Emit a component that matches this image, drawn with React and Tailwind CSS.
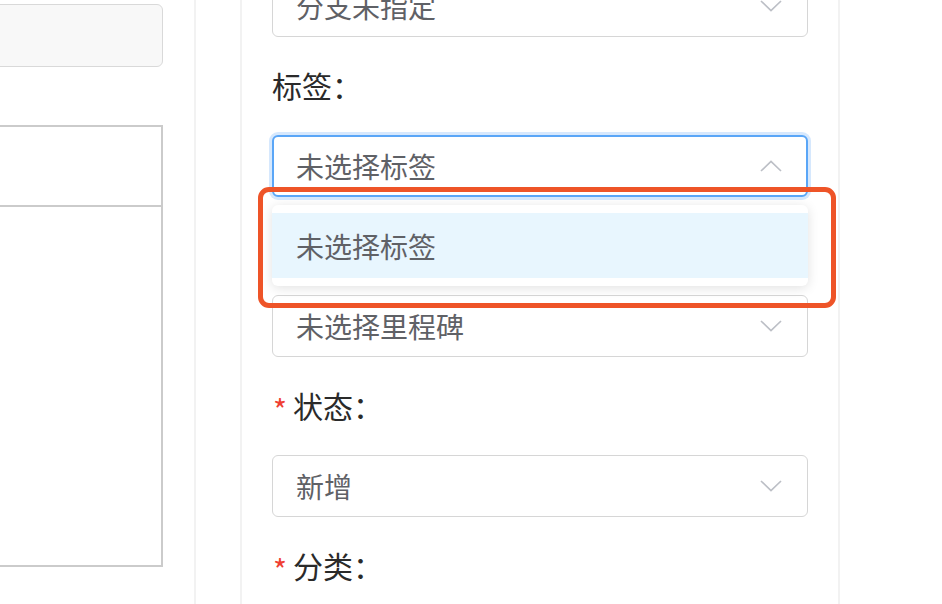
import React from 'react';

const font = { fontFamily: '"Noto Sans CJK SC", "Noto Sans", sans-serif' };

function Chevron({ up }) {
    return (
        <svg width="22" height="12" viewBox="0 0 22 12" className="shrink-0">
            <polyline
                points={up ? "1,11 11,1.5 21,11" : "1,1 11,10.5 21,1"}
                fill="none"
                stroke="#bcbfc6"
                strokeWidth="1.7"
            />
        </svg>
    );
}

function Select({ value, focused, up }) {
    return (
        <div
            className={
                focused
                    ? "h-[62px] w-[536px] rounded-[6px] border-2 border-[#5aa6f7] shadow-[0_0_0_3px_#d6e8fd] bg-white flex items-center justify-between pl-[22px] pr-[24px]"
                    : "h-[62px] w-[536px] rounded-[6px] border-[1.5px] border-[#d6d6d6] bg-white flex items-center justify-between pl-[23px] pr-[25px]"
            }
        >
            <span className="text-[28px] leading-none text-[#5f6166]">{value}</span>
            <Chevron up={up} />
        </div>
    );
}

function Label({ text, required }) {
    return (
        <div className="h-[98px] flex items-center pb-[2px]">
            {required && <span className="text-[30px] leading-none text-[#ef3f33] mr-[6px] mt-[8px] ml-[1px]">*</span>}
            <span className="text-[30px] leading-none text-[#2a2a2a]">{text}：</span>
        </div>
    );
}

export default function App() {
    return (
        <div className="w-[942px] h-[604px] overflow-hidden bg-white flex" style={font}>
            {/* left side, cut off */}
            <div className="w-[196px] h-full shrink-0 border-r-2 border-[#f2f2f2] overflow-hidden">
                <div className="w-[173px] -ml-[10px] mt-[4px] h-[63px] rounded-[6px] border-[1.5px] border-[#d9d9d9] bg-[#f8f8f8]" />
                <div className="w-[173px] -ml-[10px] mt-[58px] h-[442px] border-2 border-[#cbcbcb] flex flex-col">
                    <div className="h-[80px] border-b-2 border-[#cbcbcb]" />
                </div>
            </div>

            <div className="w-[44px] shrink-0" />

            {/* form panel */}
            <div className="w-[600px] h-full shrink-0 border-x-2 border-[#f2f2f2] pl-[30px]">
                <div className="mt-[-25px] flex flex-col">
                    <Select value="分支未指定" />
                    <Label text="标签" />
                    <div className="relative">
                        <Select value="未选择标签" focused up />
                        <div className="absolute left-0 top-[70px] w-[536px] h-[81px] bg-white rounded-[6px] shadow-[0_2px_12px_rgba(0,0,0,0.12)] py-[8px] z-10">
                            <div className="h-[65px] bg-[#e8f6fe] flex items-center pl-[24px]">
                                <span className="text-[28px] leading-none text-[#5f6166]">未选择标签</span>
                            </div>
                        </div>
                        <div className="absolute left-[-14px] top-[52px] w-[578px] h-[121px] rounded-[11px] border-[5px] border-[#ee5428] z-20" />
                    </div>
                    <Label text="里程碑" />
                    <Select value="未选择里程碑" />
                    <Label text="状态" required />
                    <Select value="新增" />
                    <Label text="分类" required />
                </div>
            </div>
        </div>
    );
}
